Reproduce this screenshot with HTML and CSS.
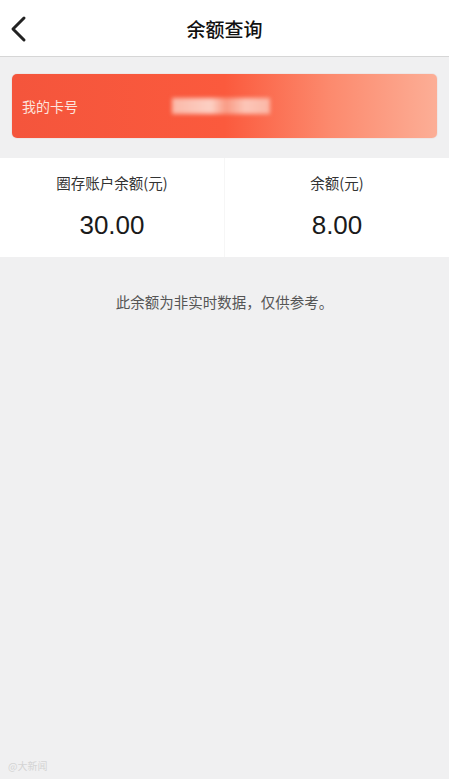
FILE: index.html
```html
<!DOCTYPE html>
<html lang="zh-CN">
<head>
    <meta charset="UTF-8">
    <meta name="viewport" content="width=device-width, initial-scale=1.0">
    <title>余额查询</title>
    <link rel="stylesheet" href="styles.css">
</head>
<body>
    <div class="header">
        <a class="back" href="#">
            <svg width="18" height="28" viewBox="0 0 18 28">
                <path d="M15 3 L4 14 L15 25" fill="none" stroke="#222" stroke-width="3" stroke-linecap="round" stroke-linejoin="round"/>
            </svg>
        </a>
        <h1>余额查询</h1>
    </div>

    <div class="card">
        <span class="card-label">我的卡号</span>
        <span class="card-number"></span>
    </div>

    <div class="balances">
        <div class="balance">
            <div class="balance-label">圈存账户余额(元)</div>
            <div class="balance-value">30.00</div>
        </div>
        <div class="balance">
            <div class="balance-label">余额(元)</div>
            <div class="balance-value">8.00</div>
        </div>
    </div>

    <p class="note">此余额为非实时数据，仅供参考。</p>

    <div class="watermark">@大新闻</div>
</body>
</html>
```

FILE: styles.css
```css
body {
    margin: 0;
    font-family: "Noto Sans CJK SC", "Noto Sans", sans-serif;
    background-color: #f0f0f1;
    min-height: 779px;
    position: relative;
}
.header {
    height: 56px;
    background-color: #fff;
    border-bottom: 1px solid #d6d6d6;
    display: flex;
    align-items: center;
    justify-content: center;
    position: relative;
}
.header h1 {
    margin: 0;
    font-size: 19px;
    font-weight: 500;
    color: #111;
}
.back {
    position: absolute;
    left: 9px;
    top: 15px;
}
.card {
    margin: 17px 12px 0;
    height: 64px;
    border-radius: 5px;
    background: linear-gradient(to right, #f4553c 0%, #fb5a3d 50%, #fc8a6e 75%, #fcae96 100%);
    display: flex;
    align-items: center;
    padding-left: 10px;
    box-shadow: 0 0 1px rgba(200, 80, 60, 0.5);
}
.card-label {
    color: #fde3dc;
    font-size: 14px;
}
.card-number {
    margin-left: 94px;
    width: 98px;
    height: 16px;
    background: linear-gradient(to right, #fbb8a8 0%, #fcd0c4 40%, #f99a84 55%, #fcc6b8 75%, #fbb7a6 100%);
    filter: blur(2px);
}
.balances {
    margin-top: 20px;
    height: 99px;
    background-color: #fff;
    display: flex;
}
.balance {
    flex: 1;
    text-align: center;
    padding-top: 14px;
}
.balance + .balance {
    border-left: 1px solid #f6f6f6;
}
.balance-label {
    font-size: 14.5px;
    color: #333;
}
.balance-value {
    margin-top: 17px;
    font-family: "Liberation Sans", Arial, sans-serif;
    font-size: 26px;
    color: #1a1a1a;
}
.note {
    margin: 34px 0 0;
    text-align: center;
    font-size: 14.5px;
    color: #555;
}
.watermark {
    position: absolute;
    left: 8px;
    bottom: 6px;
    font-size: 10px;
    color: #d4d4d4;
}
```
